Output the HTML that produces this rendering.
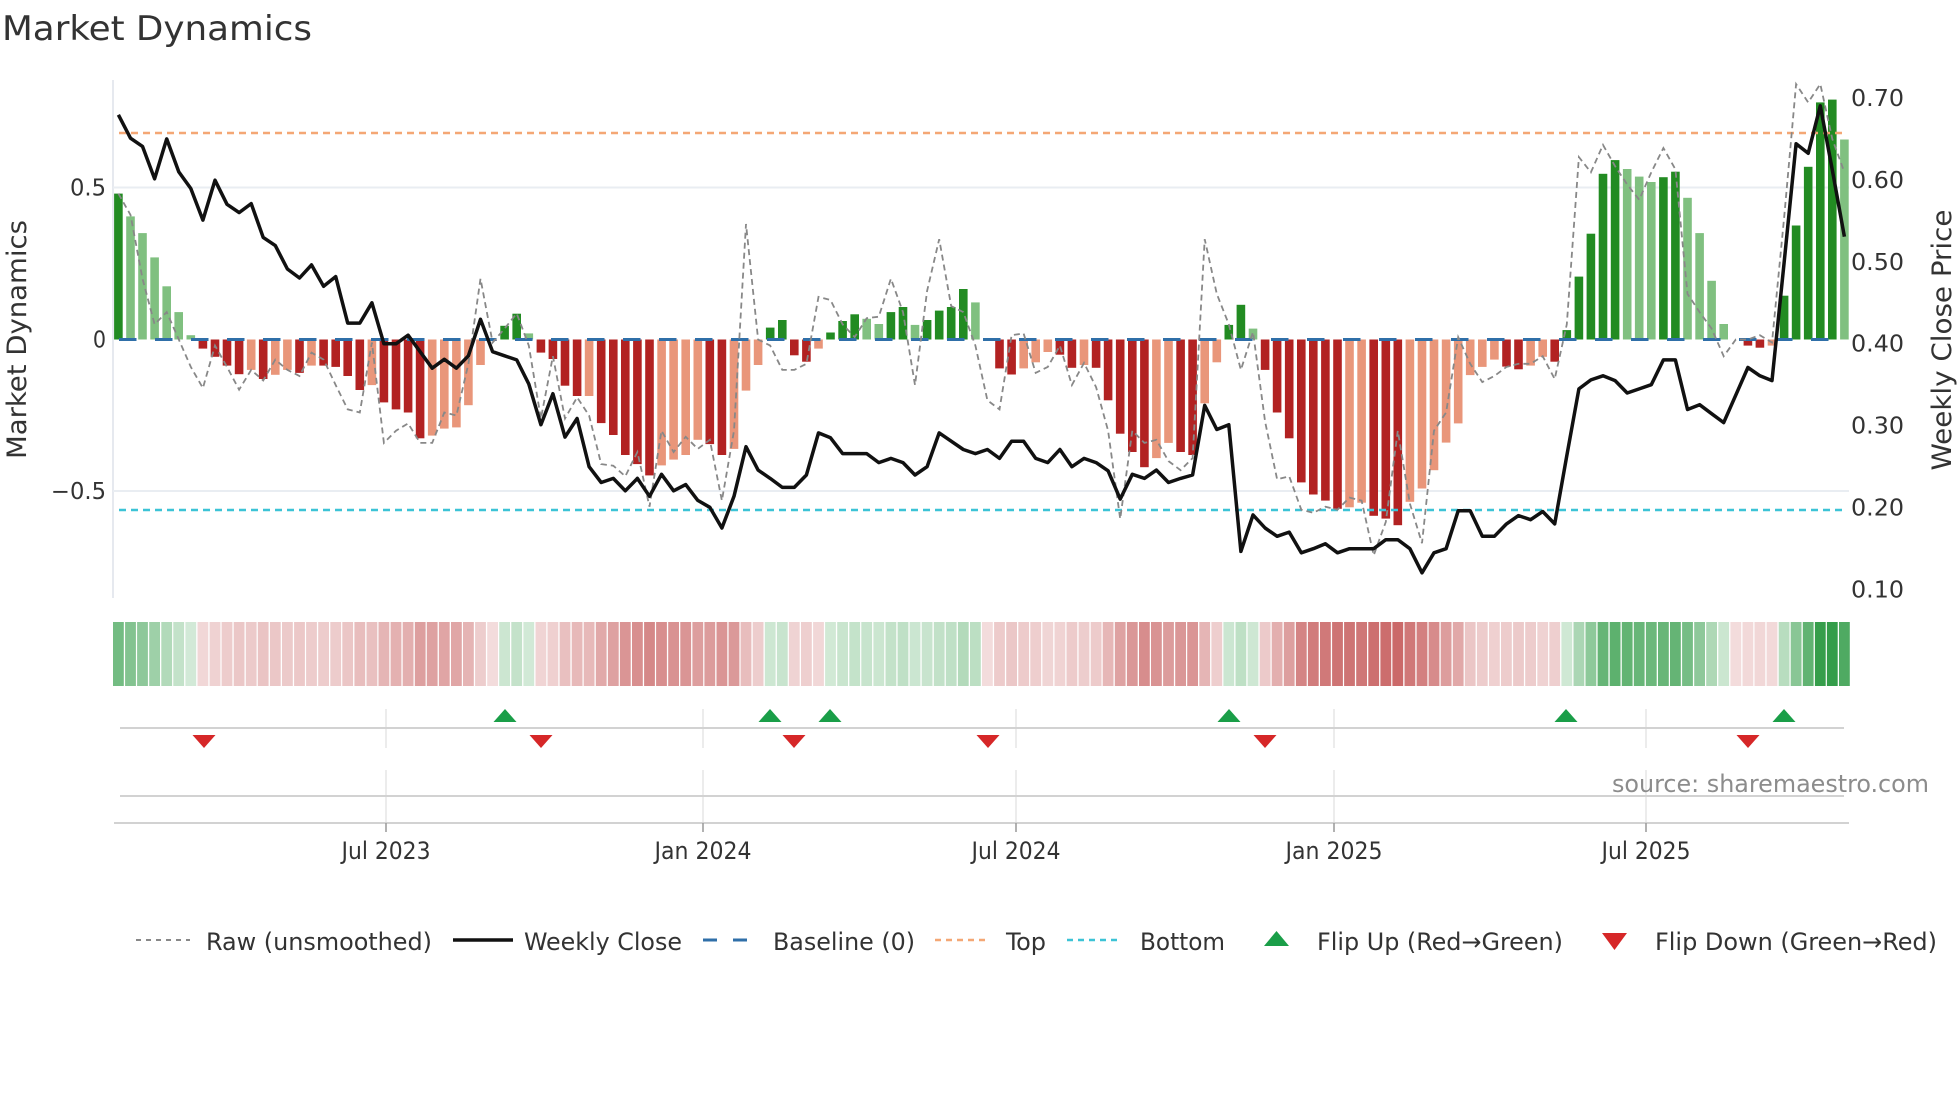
<!DOCTYPE html>
<html><head><meta charset="utf-8"><style>
html,body{margin:0;padding:0;background:#fff;}
svg{display:block;font-family:"DejaVu Sans Condensed","DejaVu Sans","Liberation Sans",sans-serif;}
</style></head><body>
<svg id="s" width="1960" height="1102" viewBox="0 0 1960 1102" xmlns="http://www.w3.org/2000/svg">
<rect width="1960" height="1102" fill="#fff"/>
<defs><clipPath id="pc"><rect x="113" y="80" width="1740" height="520"/></clipPath></defs>
<text x="2" y="40" font-size="34" fill="#333" textLength="310" lengthAdjust="spacingAndGlyphs">Market Dynamics</text>
<!-- axes/grid -->
<line x1="113" y1="80" x2="113" y2="598" stroke="#e6e9ef" stroke-width="2"/>
<line x1="113" y1="187.5" x2="1849" y2="187.5" stroke="#e9edf2" stroke-width="2"/>
<line x1="113" y1="491" x2="1849" y2="491" stroke="#e9edf2" stroke-width="2"/>
<g id="bars"></g>
<line x1="119" y1="133" x2="1846" y2="133" stroke="#f4a775" stroke-width="2.5" stroke-dasharray="7,5"/>
<line x1="119" y1="510" x2="1846" y2="510" stroke="#3cc3d6" stroke-width="2.5" stroke-dasharray="7,5"/>
<line x1="119" y1="339.5" x2="1846" y2="339.5" stroke="#2f6fa8" stroke-width="3" stroke-dasharray="17.5,18.5"/>
<g clip-path="url(#pc)"><polyline id="raw" fill="none" stroke="#888" stroke-width="1.8" stroke-dasharray="6,4"/></g>
<polyline id="price" fill="none" stroke="#111" stroke-width="3.5" stroke-linejoin="round"/>
<!-- tick labels -->
<g font-size="23" fill="#333">
<text x="106" y="195.5" text-anchor="end" textLength="36" lengthAdjust="spacingAndGlyphs">0.5</text>
<text x="106" y="347.5" text-anchor="end">0</text>
<text x="106" y="499" text-anchor="end" textLength="55" lengthAdjust="spacingAndGlyphs">−0.5</text>
<text x="1851" y="106" textLength="53" lengthAdjust="spacingAndGlyphs">0.70</text>
<text x="1851" y="188" textLength="53" lengthAdjust="spacingAndGlyphs">0.60</text>
<text x="1851" y="270" textLength="53" lengthAdjust="spacingAndGlyphs">0.50</text>
<text x="1851" y="351.5" textLength="53" lengthAdjust="spacingAndGlyphs">0.40</text>
<text x="1851" y="433.5" textLength="53" lengthAdjust="spacingAndGlyphs">0.30</text>
<text x="1851" y="515.5" textLength="53" lengthAdjust="spacingAndGlyphs">0.20</text>
<text x="1851" y="597.5" textLength="53" lengthAdjust="spacingAndGlyphs">0.10</text>
</g>
<text transform="translate(26,339.5) rotate(-90)" font-size="27" fill="#333" text-anchor="middle" textLength="239" lengthAdjust="spacingAndGlyphs">Market Dynamics</text>
<text transform="translate(1951,340) rotate(-90)" font-size="27" fill="#333" text-anchor="middle" textLength="261" lengthAdjust="spacingAndGlyphs">Weekly Close Price</text>
<!-- heat strip -->
<g id="strip"></g>
<!-- lower panels -->
<g stroke="#e6e6e6" stroke-width="1.5">
<line x1="386" y1="709" x2="386" y2="748"/><line x1="703" y1="709" x2="703" y2="748"/><line x1="1016" y1="709" x2="1016" y2="748"/><line x1="1334" y1="709" x2="1334" y2="748"/><line x1="1646" y1="709" x2="1646" y2="748"/>
<line x1="386" y1="770" x2="386" y2="822"/><line x1="703" y1="770" x2="703" y2="822"/><line x1="1016" y1="770" x2="1016" y2="822"/><line x1="1334" y1="770" x2="1334" y2="822"/><line x1="1646" y1="770" x2="1646" y2="822"/>
</g>
<line x1="120" y1="728" x2="1844" y2="728" stroke="#d2d2d2" stroke-width="2"/>
<line x1="120" y1="796" x2="1844" y2="796" stroke="#d2d2d2" stroke-width="2"/>
<line x1="114" y1="823" x2="1849" y2="823" stroke="#d2d2d2" stroke-width="2"/>
<g stroke="#999" stroke-width="1.5">
<line x1="386" y1="823" x2="386" y2="832"/><line x1="703" y1="823" x2="703" y2="832"/><line x1="1016" y1="823" x2="1016" y2="832"/><line x1="1334" y1="823" x2="1334" y2="832"/><line x1="1646" y1="823" x2="1646" y2="832"/>
</g>
<g id="flips"></g>
<text x="1612" y="792" font-size="24" fill="#8c8c8c" textLength="317" lengthAdjust="spacingAndGlyphs">source: sharemaestro.com</text>
<g font-size="24" fill="#333" text-anchor="middle">
<text x="386" y="859" textLength="89" lengthAdjust="spacingAndGlyphs">Jul 2023</text>
<text x="703" y="859" textLength="97" lengthAdjust="spacingAndGlyphs">Jan 2024</text>
<text x="1016" y="859" textLength="89" lengthAdjust="spacingAndGlyphs">Jul 2024</text>
<text x="1334" y="859" textLength="97" lengthAdjust="spacingAndGlyphs">Jan 2025</text>
<text x="1646" y="859" textLength="89" lengthAdjust="spacingAndGlyphs">Jul 2025</text>
</g>
<!-- legend -->
<line x1="136" y1="940" x2="190" y2="940" stroke="#888" stroke-width="2" stroke-dasharray="5,5"/>
<line x1="453" y1="940" x2="513" y2="940" stroke="#111" stroke-width="3.5"/>
<line x1="703" y1="940" x2="757" y2="940" stroke="#2f6fa8" stroke-width="3" stroke-dasharray="14,16"/>
<line x1="935" y1="940" x2="990" y2="940" stroke="#f4a775" stroke-width="2.5" stroke-dasharray="6,5"/>
<line x1="1067" y1="940" x2="1122" y2="940" stroke="#3cc3d6" stroke-width="2.5" stroke-dasharray="6,5"/>
<polygon points="1264,946 1289,946 1276.5,931" fill="#1a9e48"/>
<polygon points="1602,933 1627,933 1614.5,950" fill="#d62728"/>
<g font-size="24" fill="#333">
<text x="206" y="950" textLength="226" lengthAdjust="spacingAndGlyphs">Raw (unsmoothed)</text>
<text x="524" y="950" textLength="158" lengthAdjust="spacingAndGlyphs">Weekly Close</text>
<text x="773" y="950" textLength="142" lengthAdjust="spacingAndGlyphs">Baseline (0)</text>
<text x="1006" y="950" textLength="40" lengthAdjust="spacingAndGlyphs">Top</text>
<text x="1140" y="950" textLength="85" lengthAdjust="spacingAndGlyphs">Bottom</text>
<text x="1317" y="950" textLength="246" lengthAdjust="spacingAndGlyphs">Flip Up (Red→Green)</text>
<text x="1655" y="950" textLength="282" lengthAdjust="spacingAndGlyphs">Flip Down (Green→Red)</text>
</g>
</svg>
<script>
(function(){
var NS="http://www.w3.org/2000/svg";
var B="480D 405L 350L 270L 175L 90L 14L -30D -57D -86D -114D -100L -130D -116L -100L -110D -86L -86D -90D -120D -166D -150L -207D -230D -240D -325D -316L -293L -289L -216L -84L -5L 45D 85D 20L -43D -64D -152D -186D -186L -275D -314D -380D -410D -447D -414L -395L -380L -330L -344D -380D -360L -168L -84L 39D 64D -52D -73D -30L 23D 61D 83D 68L 51L 90D 107D 48L 64D 95D 107D 166D 122L 0L -95D -115D -95L -75L -41L -50D -93D -84L -93D -200D -310D -370D -420D -390L -340L -370D -380D -210L -75L 48D 114D 36L -100D -240D -325D -470D -510D -530D -557D -552L -537L -580D -589D -611D -534L -490L -430L -339L -276L -117L -90L -66L -89D -98D -86L -57L -73D 31D 207D 348D 545D 590D 561L 536L 518L 534D 552D 466L 350L 193L 51L 0L -20D -27D -20L 144D 375D 568D 780D 789D 658L".split(" ");
var P=[130,198,222,316,200,296,344,436,320,390,414,388,486,510,578,604,566,628,600,735,735,676,795,795,770,818,866,840,866,830,724,818,830,842,912,1030,940,1066,1012,1152,1198,1186,1222,1186,1238,1174,1222,1204,1250,
1270,1330,1238,1094,1162,1186,1212,1212,1176,1054,1068,1114,1114,1114,1140,1128,1140,1176,1152,1054,1078,1102,1114,1102,1128,1078,1078,1128,1140,1102,1152,1128,1140,1164,1246,1174,1186,1162,1198,1186,1176,974,1044,1030,1398,1292,1330,1354,
1342,1402,1390,1376,1402,1390,1390,1390,1364,1364,1390,1460,1402,1390,1280,1280,1354,1354,1318,1294,1306,1282,1318,1120,926,900,888,902,938,926,914,842,842,986,972,998,1024,944,864,888,902,560,214,242,104,290,484];
var R=[480,410,200,50,90,0,-90,-160,-20,-90,-165,-100,-135,-66,-100,-120,-43,-66,-150,-230,-240,-10,-340,-300,-276,-340,-340,-240,-250,-80,200,-10,36,86,-20,-260,-55,-260,-190,-250,-410,-415,-450,-370,-550,-300,-370,-320,-360,
-330,-530,-300,380,0,-20,-100,-100,-80,140,130,50,8,70,75,200,90,-150,160,330,110,90,-20,-200,-230,14,20,-110,-90,-20,-150,-77,-157,-300,-590,-300,-340,-330,-400,-430,-390,330,150,50,-100,25,-270,-460,
-450,-560,-570,-550,-560,-520,-530,-710,-600,-300,-540,-670,-300,-240,8,-80,-140,-120,-90,-80,-80,-55,-130,50,600,550,640,570,510,460,550,630,560,150,90,36,-55,0,0,14,-10,400,840,780,840,660,550];
var bars=document.getElementById("bars"),strip=document.getElementById("strip");
function X(i){return 118.4+i*12.07;}
function mix(c,t){return "rgb("+c.map(function(v){return Math.round(255+(v-255)*t);}).join(",")+")";}
var pp=[],rp=[];
for(var i=0;i<B.length;i++){
 var s=B[i],d=s.slice(-1),v=parseInt(s)/1000,x=X(i);
 var r=document.createElementNS(NS,"rect");
 var y0=339.5,h=Math.abs(v)*304;
 r.setAttribute("x",(x-4.3).toFixed(1));r.setAttribute("width","8.6");
 r.setAttribute("y",(v>=0?y0-h:y0).toFixed(1));r.setAttribute("height",h.toFixed(1));
 r.setAttribute("fill",v>=0?(d=="D"?"#228b22":"#80c080"):(d=="D"?"#b22222":"#e9967a"));
 bars.appendChild(r);
 var c=document.createElementNS(NS,"rect");
 c.setAttribute("x",(x-5.4).toFixed(1));c.setAttribute("width","10.8");
 c.setAttribute("y","622");c.setAttribute("height","64");
 var col;
 if(v>0.001){col=mix([46,154,68],Math.min(1,0.2+0.78*v/0.8));}
 else{col=mix([200,98,98],Math.min(1,0.22+0.72*Math.abs(v)/0.6));}
 c.setAttribute("fill",col);strip.appendChild(c);
 pp.push(x.toFixed(1)+","+(70+P[i]/2.904).toFixed(1));
 rp.push(x.toFixed(1)+","+(339.5-R[i]/1000*304).toFixed(1));
}
document.getElementById("price").setAttribute("points",pp.join(" "));
document.getElementById("raw").setAttribute("points",rp.join(" "));
var f=document.getElementById("flips");
[505,770,830,1229,1566,1784].forEach(function(x){var p=document.createElementNS(NS,"polygon");p.setAttribute("points",(x-11.5)+",722 "+(x+11.5)+",722 "+x+",709");p.setAttribute("fill","#1a9e48");f.appendChild(p);});
[204,541,794,988,1265,1748].forEach(function(x){var p=document.createElementNS(NS,"polygon");p.setAttribute("points",(x-11.5)+",735 "+(x+11.5)+",735 "+x+",748");p.setAttribute("fill","#d62728");f.appendChild(p);});
})();
</script>
</body></html>
